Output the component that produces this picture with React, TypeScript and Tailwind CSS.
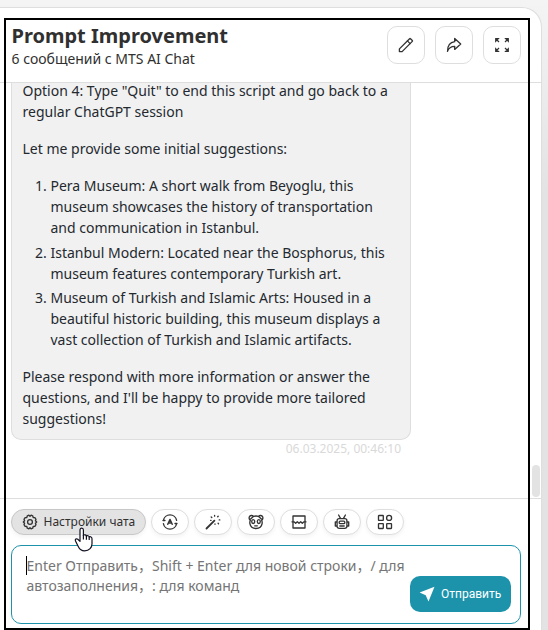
import type { ReactNode } from "react";

function Icon({ children, className = "" }: { children: ReactNode; className?: string }) {
  return (
    <svg
      width="16"
      height="16"
      viewBox="0 0 16 16"
      fill="none"
      stroke="#333333"
      strokeWidth="1.33"
      strokeLinecap="round"
      strokeLinejoin="round"
      className={`shrink-0 ${className}`}
    >
      {children}
    </svg>
  );
}

const RenameIcon = () => (
  <Icon>
    <path d="M1.4 14.6V11.9L11.6 1.7c.3-.3.6-.3.9 0l1.8 1.8c.3.3.3.6 0 .9L4.1 14.6Z" />
    <path d="m9.4 3.9 2.7 2.7" />
  </Icon>
);

const ShareIcon = () => (
  <Icon>
    <path d="M8.7 1.4 14.7 7 8.7 12.4V9.3C5.2 9.3 2.6 10.8 1.5 14.4 1.5 9.5 3.4 5.4 8.7 4.7Z" />
  </Icon>
);

const MaxIcon = () => (
  <Icon>
    <path d="M1.7 4.3V1.7h2.6ZM2 2l3 3M11.7 1.7h2.6v2.6ZM14 2l-3 3M1.7 11.7v2.6h2.6ZM2 14l3-3M14.3 11.7v2.6h-2.6ZM14 14l-3-3" strokeWidth="1.2" strokeLinejoin="miter" strokeLinecap="butt" />
  </Icon>
);

const SettingsIcon = () => (
  <Icon>
    <path d="M5.3 1.8 6.9 1.2 8 2.3l1.1-1.1 1.6.6.5 1.7 1.7.1 1.1 1.7-.6 1.4L14.7 8l-1.3 1.3.6 1.4-1.1 1.7-1.7.1-.5 1.7-1.6.6L8 13.7l-1.1 1.1-1.6-.6-.5-1.7-1.7-.1L2 10.7l.6-1.4L1.3 8l1.3-1.3L2 5.3l1.1-1.7 1.7-.1Z" />
    <circle cx="8" cy="8" r="2.4" />
  </Icon>
);

const AutoIcon = () => (
  <Icon>
    <path d="M1.4 6.4a6.7 6.7 0 0 1 13.2 0M1.4 9.6a6.7 6.7 0 0 0 13.2 0M1 6.5h2M13 9.5h2" />
    <path d="M5.7 10.4 8 5.4l2.3 5M6.4 9h3.2" />
  </Icon>
);

const WandIcon = () => (
  <Icon>
    <path d="m1.5 14.5 7.9-7.9" strokeWidth="1.8" />
    <path d="M9.6 1.4v.8M13.2 2.2l-.5.6M6.2 3l.6.5M5.6 6.3h.5M10 9.9v.4M13.1 9.3l.4.4M14.2 5.9h.6" />
  </Icon>
);

const MaskIcon = () => (
  <Icon>
    <path d="M2.4 6.2C.9 5.3.8 3.3 1.7 2.3c1-1.1 2.7-1 3.7.1 1.6-.5 3.6-.5 5.2 0 1-1.1 2.7-1.2 3.7-.1.9 1 .8 3-.7 3.9.5 1 .7 2.3.5 3.5-.5 3-2.9 4.8-6.1 4.8s-5.6-1.8-6.1-4.8c-.2-1.2 0-2.5.5-3.5Z" />
    <path d="M5.4 2.4 2.6 5M10.6 2.4 13.4 5M6.7 11.8h2.6" />
    <ellipse cx="5.2" cy="7.6" rx="1.5" ry="1.9" />
    <ellipse cx="10.8" cy="7.6" rx="1.5" ry="1.9" />
  </Icon>
);

const BreakIcon = () => (
  <Icon>
    <path d="M2 7.6V2h12v5.6M2 8.6V14h12V8.6M1 7.8h2l1.7 1.5 1.6-1.5L8 9.3l1.7-1.5 1.6 1.5L13 7.8h2" />
  </Icon>
);

const RobotIcon = () => (
  <Icon>
    <path d="m4.6 1 1.9 3.4M11.4 1 9.5 4.4M5.3 4.6h5.4c1.4 0 2.2.8 2.2 2.1v5.5c0 1.3-.8 2.1-2.2 2.1H5.3c-1.4 0-2.2-.8-2.2-2.1V6.7c0-1.3.8-2.1 2.2-2.1ZM3 8H1.3v4H3M13 8h1.7v4H13M5.8 12h4.4" />
    <rect x="5.2" y="7.2" width="5.6" height="2.5" rx="1" />
  </Icon>
);

const GridIcon = () => (
  <Icon>
    <rect x="1.5" y="1.5" width="4.8" height="4.8" rx=".4" />
    <circle cx="12.1" cy="3.9" r="2.5" />
    <rect x="1.5" y="9.7" width="4.8" height="4.8" rx=".4" />
    <rect x="9.7" y="9.7" width="4.8" height="4.8" rx=".4" />
  </Icon>
);

function HeaderButton({ children }: { children: ReactNode }) {
  return (
    <button className="flex size-[38px] items-center justify-center rounded-[10px] border border-[#dedede] bg-white">
      {children}
    </button>
  );
}

function Chip({ children }: { children: ReactNode }) {
  return (
    <button className="flex h-[26px] w-[38px] items-center justify-center rounded-full border border-[#dedede] bg-white shadow-[0_2px_4px_rgba(0,0,0,0.05)]">
      {children}
    </button>
  );
}

const chips = [AutoIcon, WandIcon, MaskIcon, BreakIcon, RobotIcon, GridIcon];

const museums = [
  ["Pera Museum: A short walk from Beyoglu, this", "museum showcases the history of transportation", "and communication in Istanbul."],
  ["Istanbul Modern: Located near the Bosphorus, this", "museum features contemporary Turkish art."],
  ["Museum of Turkish and Islamic Arts: Housed in a", "beautiful historic building, this museum displays a", "vast collection of Turkish and Islamic artifacts."],
];

function Lines({ lines }: { lines: string[] }) {
  return (
    <>
      {lines.map((line) => (
        <span key={line} className="block whitespace-nowrap">{line}</span>
      ))}
    </>
  );
}

export default function App() {
  return (
    <div className="relative h-[630px] w-[548px] overflow-hidden bg-linear-to-b from-[#f4f4f4] via-[#e3e3e3] via-30% to-[#e3e3e3] pt-[7px] font-['Noto_Sans','Noto_Sans_CJK_SC',sans-serif] text-[#303030]">
      <main className="flex h-[640px] w-[542px] flex-col overflow-hidden rounded-tr-[20px] border-t border-r border-[#dedede] bg-white">
        <header className="flex h-[75px] shrink-0 justify-between border-b border-[#dedede] pr-5 pl-[11.5px]">
          <div className="pt-[13px]">
            <h1 className="text-[20px] leading-[30px] font-bold">Prompt Improvement</h1>
            <p className="-mt-px text-[14px] leading-[17px]">6 сообщений с MTS AI Chat</p>
          </div>
          <div className="flex gap-2.5 pt-[18px]">
            <HeaderButton><RenameIcon /></HeaderButton>
            <HeaderButton><ShareIcon /></HeaderButton>
            <HeaderButton><MaxIcon /></HeaderButton>
          </div>
        </header>

        <section className="flex h-[415px] shrink-0 justify-between overflow-hidden pl-[11px]">
          <div className="w-[400px]">
            <article className="h-[357px] rounded-b-[10px] border border-t-0 border-[#dedede] bg-[#f1f1f1] px-[10.5px] text-[14px] leading-[21px] text-[#24292f]">
              <p>
                <span className="block pb-[3px] leading-[15px] whitespace-nowrap">Option 4: Type "Quit" to end this script and go back to a</span>
                <span className="block">regular ChatGPT session</span>
              </p>
              <p className="mt-4">Let me provide some initial suggestions:</p>
              <ol className="mt-4 list-decimal pl-7">
                {museums.map((lines) => (
                  <li key={lines[0]} className="mt-[3.5px] first:mt-0"><Lines lines={lines} /></li>
                ))}
              </ol>
              <p className="mt-4"><Lines lines={["Please respond with more information or answer the", "questions, and I'll be happy to provide more tailored", "suggestions!"]} /></p>
            </article>
            <time className="block pr-2.5 text-right text-[12px] leading-[18px] text-[#d9d9d9]">06.03.2025, 00:46:10</time>
          </div>
          <div className="flex w-[9px] flex-col justify-end pb-px">
            <div className="h-8 w-2 rounded-full bg-[#e3e3e3]" />
          </div>
        </section>

        <footer className="border-t border-[#dedede] pt-2.5 pr-5 pl-[11px]">
          <div className="flex gap-[5px]">
            <button className="flex h-[26px] w-[135px] items-center gap-[5.5px] rounded-full border border-[#c7c7c7] bg-[#e3e3e3] pl-2.5 shadow-[0_2px_4px_rgba(0,0,0,0.05)]">
              <SettingsIcon />
              <span className="text-[12px] whitespace-nowrap">Настройки чата</span>
            </button>
            {chips.map((Glyph, i) => (
              <Chip key={i}><Glyph /></Chip>
            ))}
          </div>
          <div className="mt-2.5 flex h-[79px] items-start rounded-[10px] border border-[#1d93ab] pt-2.5 pl-[14px]">
            <div className="w-[384px] text-[14px] leading-[19.6px] whitespace-nowrap text-[#757575]">
              <div className="flex items-center">
                <span className="h-[19px] w-px shrink-0 bg-black" />
                <span className="-ml-[0.5px]">Enter Отправить，Shift + Enter для новой строки，/ для</span>
              </div>
              <div className="pl-[0.5px]">автозаполнения，: для команд</div>
            </div>
            <button className="mt-5 flex h-9 w-[101px] shrink-0 items-center gap-1.5 rounded-[10px] bg-[#1d93ab] pl-[9px] font-[Roboto,sans-serif] text-[12px] text-white">
              <svg width="16" height="16" viewBox="0 0 16 16" fill="white" className="shrink-0">
                <path d="M15.5.8.6 6.5l6.1 2.7 2.8 6.2Z" />
              </svg>
              <span className="whitespace-nowrap">Отправить</span>
            </button>
          </div>
        </footer>
      </main>

      <div className="pointer-events-none absolute top-[18px] left-1 h-[612px] w-[526px] border-2 border-black" />
      <svg className="absolute top-[527px] left-[74px]" width="20" height="26" viewBox="0 0 20 26" fill="white" stroke="#111122" strokeWidth="1.2" strokeLinejoin="round">
        <path d="M6 3.1c0-2.6 3.4-2.6 3.4 0v5.3c.6-1 2.8-.8 3 .7.9-.8 2.6-.4 2.8.9 1.1-.7 2.8 0 2.8 1.7v5c0 3.7-2.6 7.2-7.4 7.2-3.3 0-5-1.5-6.2-4.1L1.5 14c-.8-1.6.8-2.9 2.3-1.7L6 14.4Z" />
        <path d="M9.4 8v4.5M12.4 9v3.7M15.2 10v3" fill="none" />
      </svg>
    </div>
  );
}
